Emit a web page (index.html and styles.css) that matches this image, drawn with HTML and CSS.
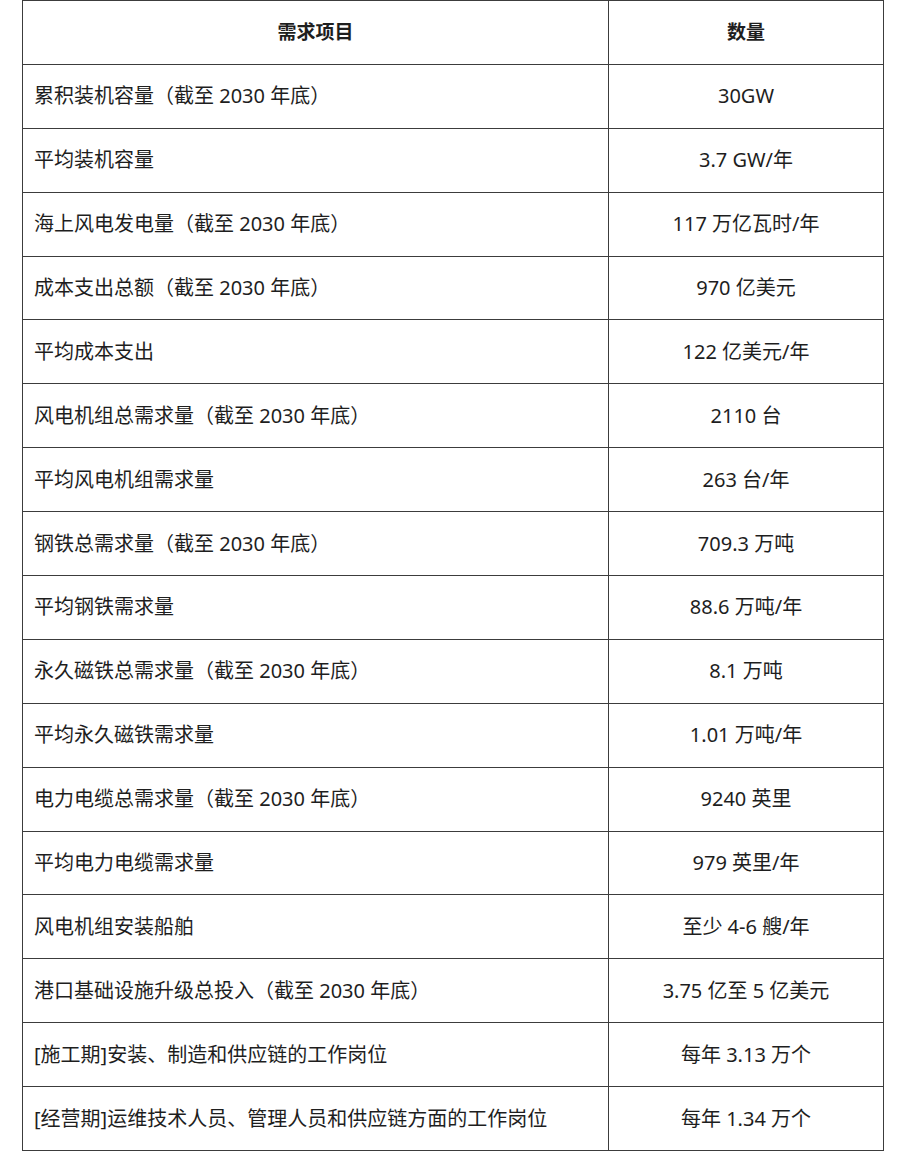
FILE: index.html
```html
<!DOCTYPE html>
<html lang="zh-CN">
<head>
<meta charset="utf-8">
<title>需求项目</title>
<link rel="stylesheet" href="styles.css">
</head>
<body>
<table class="demand">
  <thead>
    <tr><th class="item">需求项目</th><th class="qty">数量</th></tr>
  </thead>
  <tbody>
    <tr><td class="item">累积装机容量（截至 2030 年底）</td><td class="qty">30GW</td></tr>
    <tr><td class="item">平均装机容量</td><td class="qty">3.7 GW/年</td></tr>
    <tr><td class="item">海上风电发电量（截至 2030 年底）</td><td class="qty">117 万亿瓦时/年</td></tr>
    <tr><td class="item">成本支出总额（截至 2030 年底）</td><td class="qty">970 亿美元</td></tr>
    <tr><td class="item">平均成本支出</td><td class="qty">122 亿美元/年</td></tr>
    <tr><td class="item">风电机组总需求量（截至 2030 年底）</td><td class="qty">2110 台</td></tr>
    <tr><td class="item">平均风电机组需求量</td><td class="qty">263 台/年</td></tr>
    <tr><td class="item">钢铁总需求量（截至 2030 年底）</td><td class="qty">709.3 万吨</td></tr>
    <tr><td class="item">平均钢铁需求量</td><td class="qty">88.6 万吨/年</td></tr>
    <tr><td class="item">永久磁铁总需求量（截至 2030 年底）</td><td class="qty">8.1 万吨</td></tr>
    <tr><td class="item">平均永久磁铁需求量</td><td class="qty">1.01 万吨/年</td></tr>
    <tr><td class="item">电力电缆总需求量（截至 2030 年底）</td><td class="qty">9240 英里</td></tr>
    <tr><td class="item">平均电力电缆需求量</td><td class="qty">979 英里/年</td></tr>
    <tr><td class="item">风电机组安装船舶</td><td class="qty">至少 4-6 艘/年</td></tr>
    <tr><td class="item">港口基础设施升级总投入（截至 2030 年底）</td><td class="qty">3.75 亿至 5 亿美元</td></tr>
    <tr><td class="item">[施工期]安装、制造和供应链的工作岗位</td><td class="qty">每年 3.13 万个</td></tr>
    <tr><td class="item">[经营期]运维技术人员、管理人员和供应链方面的工作岗位</td><td class="qty">每年 1.34 万个</td></tr>
  </tbody>
</table>
</body>
</html>
```

FILE: styles.css
```css
html, body {
  margin: 0;
  padding: 0;
  background: #ffffff;
}

body {
  font-family: "Noto Sans", "Noto Sans CJK SC", sans-serif;
  color: #1e1e1e;
}

.demand {
  margin-left: 22px;
  width: 862px;
  border-collapse: collapse;
  table-layout: fixed;
  font-size: 20px;
}

.demand th,
.demand td {
  height: 63.9px;
  padding: 0 0 0 11px;
  border: 1.5px solid #3c3c3c;
  box-sizing: border-box;
  vertical-align: middle;
  white-space: nowrap;
  line-height: 1;
}

.demand th {
  font-weight: 700;
  font-size: 19px;
  text-align: center;
  padding: 0;
}

.demand .item {
  width: 586px;
}

.demand td.qty {
  text-align: center;
  padding: 0;
}
```
